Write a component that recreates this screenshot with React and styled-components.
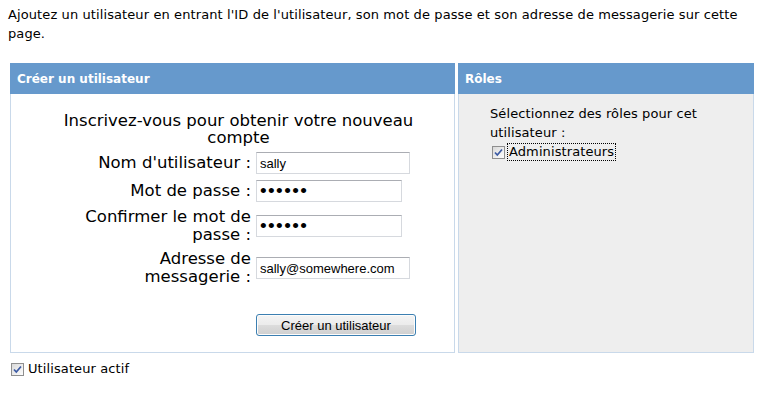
import React from 'react';
import styled, { createGlobalStyle } from 'styled-components';

const GlobalStyle = createGlobalStyle`
    body {
        margin: 0;
        background: #ffffff;
        color: #000000;
        font-family: "DejaVu Sans", Verdana, sans-serif;
        font-size: 13px;
        letter-spacing: 0.1px;
    }
`;

const Page = styled.div`
    padding: 5px 8px;
`;

const Intro = styled.p`
    margin: 0 0 20px 0;
    line-height: 19px;
`;

const PanelRow = styled.div`
    display: flex;
    gap: 3px;
    margin-left: 2px;
`;

const Panel = styled.div`
    display: flex;
    flex-direction: column;
    flex-shrink: 0;
    box-sizing: border-box;
    width: ${props => props.width}px;
    border: 1px solid #c9d9ea;
    border-top: none;
`;

const PanelHeader = styled.div`
    height: 31px;
    margin: 0 -1px;
    padding-left: 7px;
    display: flex;
    align-items: center;
    background: #6699cc;
    color: #ffffff;
    font-weight: bold;
    font-size: 12px;
    letter-spacing: 0;
`;

const PanelBody = styled.div`
    flex: 1;
    background: ${props => props.grey ? '#eeeeee' : '#ffffff'};
    padding: ${props => props.grey ? '10px 20px 0 31px' : '18px 0 16px 50px'};
    line-height: 19px;
`;

const Form = styled.div`
    display: grid;
    grid-template-columns: 190px 160px;
    column-gap: 5px;
    row-gap: 6px;
    align-items: center;
    font-size: 16.5px;
    letter-spacing: 0;
    line-height: 17px;
`;

const Title = styled.div`
    grid-column: 1 / span 2;
    text-align: center;
`;

const Label = styled.label`
    justify-self: end;
    max-width: 170px;
    text-align: right;
    line-height: 18px;
`;

const Input = styled.input`
    box-sizing: border-box;
    width: ${props => props.narrow ? 146 : 154}px;
    height: 22px;
    margin: 0;
    padding: 0 3px;
    border: 1px solid #d6d9de;
    border-top-color: #abadb3;
    font-family: "Liberation Sans", Arial, sans-serif;
    font-size: ${props => props.type === 'password' ? '19px' : '13px'};
    letter-spacing: ${props => props.type === 'password' ? '1.4px' : 'normal'};
    color: #000000;
    background: #ffffff;
    outline: none;
`;

const SubmitButton = styled.button`
    grid-column: 2;
    margin-top: 22px;
    width: 160px;
    height: 22px;
    padding: 0;
    border: 1px solid #3c7fb1;
    border-radius: 3px;
    background: linear-gradient(#f4f4f4 0%, #ececec 48%, #dcdcdc 52%, #cfcfcf 100%);
    box-shadow: inset 0 0 0 1px #fcfcfc;
    font-family: "Liberation Sans", Arial, sans-serif;
    font-size: 13px;
    color: #000000;
`;

const CheckRow = styled.div`
    display: flex;
    align-items: center;
    gap: 3px;
    margin: ${props => props.margin || '0'};
`;

const CheckText = styled.span`
    padding: 0 1px;
    line-height: 16px;
    outline: ${props => props.focused ? '1px dotted #000000' : 'none'};
`;

const Box = styled.span`
    display: inline-flex;
    width: 13px;
    height: 13px;
`;

function CheckBox() {
    return (
        <Box>
            <svg width="13" height="13" viewBox="0 0 13 13">
                <defs>
                    <linearGradient id="cb" x1="0" y1="0" x2="1" y2="1">
                        <stop offset="0" stopColor="#d8d8d8" />
                        <stop offset="1" stopColor="#ffffff" />
                    </linearGradient>
                </defs>
                <rect x="0.5" y="0.5" width="12" height="12" fill="url(#cb)" stroke="#8f8f8f" />
                <path d="M3 6.5 L5.3 9 L10 3.5" fill="none" stroke="#3b5aa4" strokeWidth="1.7" />
            </svg>
        </Box>
    );
}

export default function App() {
    return (
        <>
            <GlobalStyle />
            <Page>
                <Intro>
                    Ajoutez un utilisateur en entrant l'ID de l'utilisateur, son mot de passe et son adresse de messagerie sur cette page.
                </Intro>
                <PanelRow>
                    <Panel width={445}>
                        <PanelHeader>Créer un utilisateur</PanelHeader>
                        <PanelBody>
                            <Form>
                                <Title>Inscrivez-vous pour obtenir votre nouveau compte</Title>
                                <Label>Nom d'utilisateur :</Label>
                                <Input defaultValue="sally" />
                                <Label>Mot de passe :</Label>
                                <Input type="password" narrow defaultValue="secret" />
                                <Label>Confirmer le mot de passe :</Label>
                                <Input type="password" narrow defaultValue="secret" />
                                <Label>Adresse de messagerie :</Label>
                                <Input defaultValue="sally@somewhere.com" />
                                <SubmitButton>Créer un utilisateur</SubmitButton>
                            </Form>
                        </PanelBody>
                    </Panel>
                    <Panel width={296}>
                        <PanelHeader>Rôles</PanelHeader>
                        <PanelBody grey>
                            Sélectionnez des rôles pour cet utilisateur :
                            <CheckRow margin="2px 0 0 2px">
                                <CheckBox />
                                <CheckText focused>Administrateurs</CheckText>
                            </CheckRow>
                        </PanelBody>
                    </Panel>
                </PanelRow>
                <CheckRow margin="8px 0 0 3px">
                    <CheckBox />
                    <CheckText>Utilisateur actif</CheckText>
                </CheckRow>
            </Page>
        </>
    );
}
